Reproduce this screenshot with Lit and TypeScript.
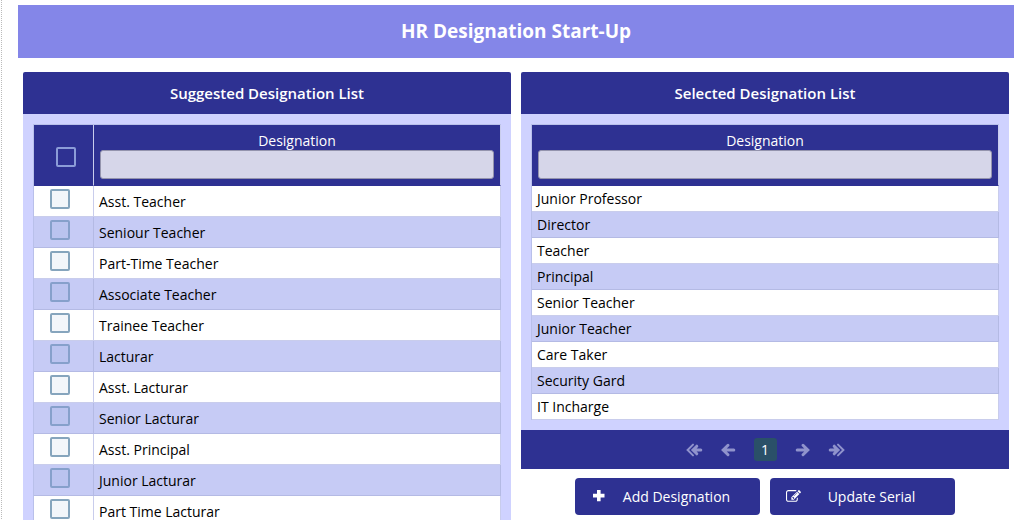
import { LitElement, html, css, svg } from "lit";
import { customElement, property } from "lit/decorators.js";

const NAVY = css`#2e3192`;

const SUGGESTED = [
  "Asst. Teacher",
  "Seniour Teacher",
  "Part-Time Teacher",
  "Associate Teacher",
  "Trainee Teacher",
  "Lacturar",
  "Asst. Lacturar",
  "Senior Lacturar",
  "Asst. Principal",
  "Junior Lacturar",
  "Part Time Lacturar",
];

const SELECTED = [
  "Junior Professor",
  "Director",
  "Teacher",
  "Principal",
  "Senior Teacher",
  "Junior Teacher",
  "Care Taker",
  "Security Gard",
  "IT Incharge",
];

const arrow = svg`<path d="M3.500 8H13.800M8 3.300L3.200 8L8 12.700" />`;
const doubleArrow = svg`<path d="M7.500 8H14.800M10.800 4.200L7 8L10.800 11.800" /><path class="thin" d="M7 2.600L1.600 8L7 13.400" />`;

@customElement("designation-table")
export class DesignationTable extends LitElement {
  @property({ type: Array }) rows: string[] = [];
  @property({ type: Boolean }) selectable = false;

  static styles = css`
    :host {
      display: block;
    }
    table {
      width: 100%;
      table-layout: fixed;
      border-collapse: separate;
      border-spacing: 0;
      border: solid #b9c0ea;
      border-width: 1px 0 0 1px;
    }
    .pick-col {
      width: 60px;
    }
    th,
    td {
      box-sizing: border-box;
      border: solid #c9cdec;
      border-width: 0 1px 1px 0;
      font-weight: 400;
    }
    th {
      padding: 6px;
      background: ${NAVY};
      color: #fff;
      border-bottom-color: #2e3192;
      text-align: center;
    }
    label {
      display: block;
      line-height: 19px;
    }
    .filter {
      display: block;
      box-sizing: border-box;
      width: 100%;
      height: 29px;
      padding: 4px 8px;
      border: 1px solid #9494ad;
      border-radius: 3px;
      background: #d6d6e9;
      font: inherit;
      outline: none;
    }
    td {
      padding: 2px 5px;
      line-height: 21px;
      background: #fff;
      color: #000;
    }
    .selectable td {
      padding: 6px 5px 4px;
      line-height: 20px;
    }
    tbody tr:nth-child(even) td {
      background: #c6cbf5;
      border-color: #b4bae4;
    }
    .selectable td.pick {
      padding: 3px 16px 7px;
    }
    th.pick {
      padding: 4px 0 0 5px;
    }
    .box {
      appearance: none;
      display: block;
      box-sizing: border-box;
      width: 20px;
      height: 20px;
      margin: 0;
      border: 2px solid #86a5bd;
      border-radius: 2px;
      background: #f3f6fa;
    }
    tr:nth-child(even) .box {
      border-color: #86a0cb;
      background: #bac3ef;
    }
    th .box {
      margin: 0 auto;
      border-color: #8c9cd8;
      background: transparent;
    }
    .box:checked {
      background: #4f6fb5;
    }
  `;

  render() {
    return html`
      <table class=${this.selectable ? "selectable" : ""}>
        <colgroup>
          ${this.selectable ? html`<col class="pick-col" />` : ""}
          <col />
        </colgroup>
        <thead>
          <tr>
            ${this.selectable
              ? html`<th class="pick"><input class="box" type="checkbox" aria-label="Select all" /></th>`
              : ""}
            <th>
              <label for="filter">Designation</label>
              <input class="filter" id="filter" type="text" />
            </th>
          </tr>
        </thead>
        <tbody>
          ${this.rows.map(
            (name) => html`<tr>
              ${this.selectable
                ? html`<td class="pick"><input class="box" type="checkbox" aria-label=${name} /></td>`
                : ""}
              <td>${name}</td>
            </tr>`
          )}
        </tbody>
      </table>
    `;
  }
}

@customElement("app-root")
export class AppRoot extends LitElement {
  static styles = css`
    :host {
      display: block;
      box-sizing: border-box;
      height: 100vh;
      overflow: hidden;
      padding: 0 13px 0 1px;
      background: #fff;
      font: 14px "Open Sans", sans-serif;
    }
    main {
      min-height: 100vh;
      padding: 5px 0 0 16px;
      border-left: 1px dotted #bbb;
    }
    h1 {
      margin: 0;
      padding: 12px;
      background: #8486e8;
      color: #fff;
      font-size: 19px;
      font-weight: 700;
      line-height: 29px;
      text-align: center;
    }
    .columns {
      display: grid;
      grid-template-columns: 1fr 1fr;
      align-items: start;
      gap: 10px;
      padding: 14px 5px 0;
    }
    h2 {
      margin: 0;
      padding: 10px;
      border-radius: 2px 2px 0 0;
      background: ${NAVY};
      color: #fff;
      font-size: 15px;
      font-weight: 600;
      line-height: 22px;
      text-align: center;
    }
    .body {
      padding: 10px;
      background: #cfd2ff;
    }
    .pager {
      display: flex;
      justify-content: center;
      align-items: center;
      gap: 17px;
      height: 39px;
      background: ${NAVY};
    }
    button {
      border: 0;
      padding: 0;
      background: none;
      color: #fff;
      font: inherit;
      cursor: pointer;
    }
    .step {
      display: flex;
    }
    .pager svg {
      width: 17px;
      height: 16px;
      fill: none;
      stroke: #9093cc;
      stroke-width: 3;
      stroke-linecap: round;
    }
    .pager .thin {
      stroke-width: 2;
    }
    .pager .forward {
      transform: scaleX(-1);
    }
    .page {
      width: 23px;
      height: 23px;
      border-radius: 3px;
      background: #2a5068;
    }
    .actions {
      display: flex;
      justify-content: center;
      gap: 10px;
      padding-top: 9px;
    }
    .action {
      display: flex;
      align-items: center;
      width: 185px;
      height: 37px;
      padding: 0 16px;
      border-radius: 4px;
      background: ${NAVY};
    }
    .action svg {
      width: 15px;
      height: 15px;
      fill: #fff;
    }
    .action span {
      flex: 1;
      padding-left: 3px;
      text-align: center;
    }
  `;

  private step(label: string, icon: unknown, forward = false) {
    return html`<button class="step" type="button" aria-label=${label}>
      <svg class=${forward ? "forward" : ""} viewBox="0 0 17 16" aria-hidden="true">${icon}</svg>
    </button>`;
  }

  render() {
    return html`
      <main>
        <h1>HR Designation Start-Up</h1>
        <div class="columns">
          <section>
            <h2>Suggested Designation List</h2>
            <div class="body">
              <designation-table .rows=${SUGGESTED} selectable></designation-table>
            </div>
          </section>
          <section>
            <h2>Selected Designation List</h2>
            <div class="body">
              <designation-table .rows=${SELECTED}></designation-table>
            </div>
            <nav class="pager" aria-label="Pages">
              ${this.step("First page", doubleArrow)} ${this.step("Previous page", arrow)}
              <button class="page" type="button">1</button>
              ${this.step("Next page", arrow, true)} ${this.step("Last page", doubleArrow, true)}
            </nav>
            <div class="actions">
              <button class="action" type="button">
                <svg viewBox="0 0 15 15" aria-hidden="true">
                  <path d="M6 1h3.600v3.800H13.500v3.600H9.600v3.900H6V8.400H2V4.800h4z" />
                </svg>
                <span>Add Designation</span>
              </button>
              <button class="action" type="button">
                <svg viewBox="0 0 1792 1792" aria-hidden="true">
                  <path d="M888 1184l116-116-152-152-116 116v56h96v96h56zm440-720q-16-16-33 1l-350 350q-17 17-1 33t33-1l350-350q17-17 1-33zm80 594v190q0 119-84.500 203.500t-203.500 84.500h-832q-119 0-203.500-84.500t-84.500-203.500v-832q0-119 84.500-203.500t203.500-84.500h832q63 0 117 25 15 7 18 23 3 17-9 29l-49 49q-14 14-32 8-23-6-45-6h-832q-66 0-113 47t-47 113v832q0 66 47 113t113 47h832q66 0 113-47t47-113v-126q0-13 9-22l64-64q15-15 35-7t20 29zm-96-738l288 288-672 672h-288v-288zm444 132l-92 92-288-288 92-92q28-28 68-28t68 28l152 152q28 28 28 68t-28 68z" />
                </svg>
                <span>Update Serial</span>
              </button>
            </div>
          </section>
        </div>
      </main>
    `;
  }
}
